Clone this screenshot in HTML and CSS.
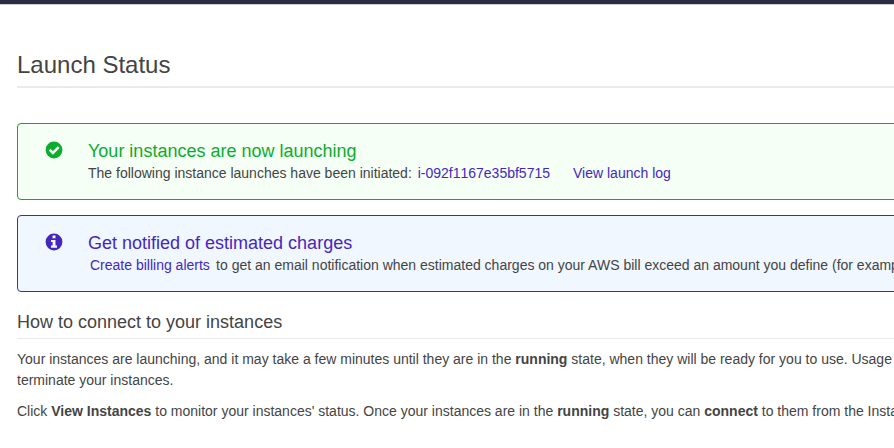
FILE: index.html
```html
<!DOCTYPE html>
<html lang="en">
<head>
<meta charset="utf-8">
<title>Launch Status</title>
<link rel="stylesheet" href="styles.css">
</head>
<body>
<header class="topbar"></header>
<main class="content">
  <h1 class="page-title">Launch Status</h1>

  <section class="alert alert-success">
    <svg class="alert-icon" viewBox="0 0 18 18" aria-hidden="true">
      <circle cx="9" cy="9" r="8.4" fill="currentColor"/>
      <path d="M4.6 8.7l3.3 3.3 5.8-5.8" fill="none" stroke="#f5fff6" stroke-width="2.6"/>
    </svg>
    <div class="alert-body">
      <h2 class="alert-title">Your instances are now launching</h2>
      <p class="alert-text">The following instance launches have been initiated: <a class="link link-id">i-092f1167e35bf5715</a><a class="link link-log">View launch log</a></p>
    </div>
  </section>

  <section class="alert alert-info">
    <svg class="alert-icon" viewBox="0 0 18 18" aria-hidden="true">
      <circle cx="9" cy="9" r="8.4" fill="currentColor"/>
      <path d="M7.5 2.6h3v2.6h-3zM6 7h4.5v5.6H12v2.2H6v-2.2h1.6V9.1H6z" fill="#f0f7ff"/>
    </svg>
    <div class="alert-body">
      <h2 class="alert-title">Get notified of estimated charges</h2>
      <p class="alert-text"><a class="link link-billing">Create billing alerts</a> to get an email notification when estimated charges on your AWS bill exceed an amount you define (for example,</p>
    </div>
  </section>

  <h2 class="section-title">How to connect to your instances</h2>
  <p class="copy">Your instances are launching, and it may take a few minutes until they are in the <b>running</b> state, when they will be ready for you to use. Usage<br>terminate your instances.</p>
  <p class="copy">Click <b>View Instances</b> to monitor your instances' status. Once your instances are in the <b>running</b> state, you can <b>connect</b> to them from the Instances</p>
</main>
</body>
</html>
```

FILE: styles.css
```css
* {
  box-sizing: border-box;
}

html,
body {
  margin: 0;
  height: 100%;
  overflow: hidden;
}

body {
  background: #fff;
  color: #444;
  font: 14px/21px "Liberation Sans", Arial, sans-serif;
}

h1,
h2,
p {
  margin: 0;
  font-weight: normal;
  white-space: nowrap;
}

.topbar {
  height: 5px;
  background: #2b2c44;
  border-bottom: 1px solid #ccc;
}

.content {
  width: 960px;
  padding: 44px 0 0 17px;
}

.page-title {
  padding-bottom: 5px;
  border-bottom: 2px solid #eaeaea;
  margin-bottom: 35px;
  font-size: 24px;
  line-height: 32px;
}

.alert {
  display: flex;
  height: 77px;
  padding: 16px 0 0 27px;
  margin-bottom: 15px;
  border: 1px solid;
  border-radius: 4px;
}

.alert-success {
  color: #0bad2c;
  background: #f5fff6;
}

.alert-info {
  color: #4527be;
  background: #f0f7ff;
  margin-bottom: 19px;
}

.alert-icon {
  flex: none;
  width: 18px;
  height: 18px;
  margin: 1px 25px 0 0;
}

.alert-title {
  font-size: 18px;
  line-height: 22px;
}

.alert-text {
  line-height: 22px;
  color: #444;
}

.link {
  color: #4527be;
}

.link-id {
  padding: 0 2px;
  font-kerning: none;
}

.link-log {
  padding-left: 21px;
}

.link-billing {
  padding: 0 2.4px 0 2px;
}

.section-title {
  padding-bottom: 5px;
  border-bottom: 1px solid #eaeaea;
  margin-bottom: 10px;
  font-size: 18px;
  line-height: 22px;
}

.copy {
  margin-bottom: 10px;
}
```
